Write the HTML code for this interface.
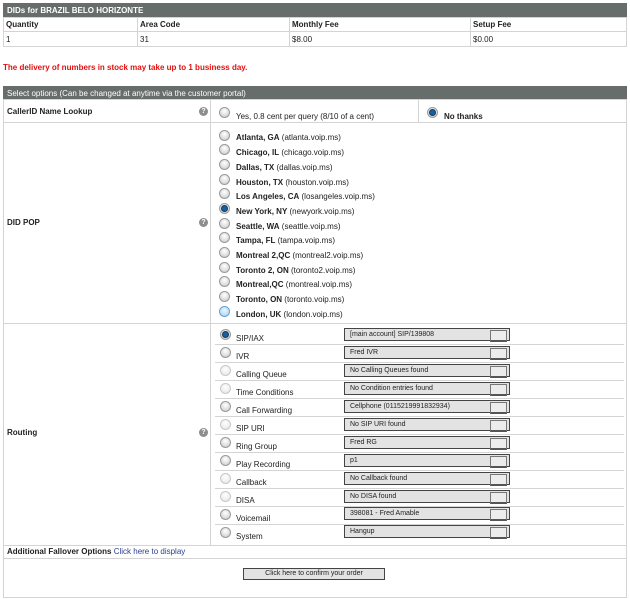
<!DOCTYPE html>
<html><head><meta charset="utf-8"><style>
*{margin:0;padding:0;box-sizing:border-box}
body{width:630px;height:599px;background:#fff;position:relative;overflow:hidden;font-family:"Liberation Sans","DejaVu Sans",sans-serif;font-size:8px;color:#222}
.a{position:absolute}
.hd{background:#676d6a;color:#fff;font-weight:bold;padding:3px 4px;height:14px;line-height:9px}
.b{font-weight:bold}
.bx{border:1px solid #d4d4d4}
.vl{position:absolute;width:1px;background:#d4d4d4}
.hl{position:absolute;height:1px;background:#d4d4d4}
.r{position:absolute;width:11px;height:11px;border-radius:50%;background:radial-gradient(circle at 50% 35%,#fff,#d8d8d8 70%,#b8b8b8);border:1px solid #9a9a9a}
.r.on::after{content:"";position:absolute;left:2px;top:2px;width:5px;height:5px;border-radius:50%;background:#1d5f9c;box-shadow:0 0 0 1px #0c3a66}
.r.lt{background:radial-gradient(circle at 50% 35%,#eaf6ff,#b8dcf5 70%,#7fb8e0);border-color:#6aa2cf}
.r.dim{border-color:#c8c8c8;background:radial-gradient(circle at 50% 35%,#fff,#ececec 70%)}
.q{position:absolute;width:9px;height:9px;border-radius:50%;background:#8d8d8d;color:#fff;font-size:7px;line-height:9px;text-align:center;font-weight:bold}
.sel{position:absolute;left:344px;width:166px;height:13px;border:1px solid #444;background:#e3e3e3;font-size:7px;line-height:11px;padding-left:5px;color:#222}
.sel::after{content:"";position:absolute;right:2px;top:1px;width:15px;height:9px;border:1px solid #777;background:#ececec;border-bottom:2px solid #555}
.t{position:absolute;left:236px;font-size:8px;white-space:nowrap}
</style></head><body>
<div class="a hd" style="left:3px;top:3px;width:624px">DIDs for BRAZIL BELO HORIZONTE</div>
<div class="a bx" style="left:3px;top:17px;width:624px;height:30px"></div>
<div class="hl" style="left:3px;top:31px;width:624px"></div>
<div class="vl" style="left:137px;top:17px;height:30px"></div>
<div class="vl" style="left:289px;top:17px;height:30px"></div>
<div class="vl" style="left:470px;top:17px;height:30px"></div>
<div class="a b" style="left:6px;top:20px">Quantity</div>
<div class="a b" style="left:140px;top:20px">Area Code</div>
<div class="a b" style="left:292px;top:20px">Monthly Fee</div>
<div class="a b" style="left:473px;top:20px">Setup Fee</div>
<div class="a" style="left:6px;top:35px">1</div>
<div class="a" style="left:140px;top:35px">31</div>
<div class="a" style="left:292px;top:35px">$8.00</div>
<div class="a" style="left:473px;top:35px">$0.00</div>
<div class="a b" style="left:3px;top:63px;color:#e01010">The delivery of numbers in stock may take up to 1 business day.</div>

<div class="a hd" style="left:3px;top:86px;width:624px;font-weight:normal">Select options (Can be changed at anytime via the customer portal)</div>
<div class="a bx" style="left:3px;top:99px;width:624px;height:499px"></div>
<div class="vl" style="left:210px;top:99px;height:446px"></div>
<div class="vl" style="left:418px;top:99px;height:23px"></div>
<div class="hl" style="left:3px;top:122px;width:624px"></div>
<div class="hl" style="left:3px;top:323px;width:624px"></div>
<div class="hl" style="left:3px;top:545px;width:624px"></div>
<div class="hl" style="left:3px;top:558px;width:624px"></div>

<div class="a b" style="left:7px;top:107px">CallerID Name Lookup</div>
<div class="q" style="left:199px;top:107px">?</div>
<div class="r" style="left:219px;top:107px"></div>
<div class="a" style="left:236px;top:112px">Yes, 0.8 cent per query (8/10 of a cent)</div>
<div class="r on" style="left:427px;top:107px"></div>
<div class="a b" style="left:444px;top:112px">No thanks</div>

<div class="a b" style="left:7px;top:218px">DID POP</div>
<div class="q" style="left:199px;top:218px">?</div>
<div class="r" style="left:219px;top:130px"></div><div class="t" style="top:133px"><b>Atlanta, GA</b> (atlanta.voip.ms)</div>
<div class="r" style="left:219px;top:144px"></div><div class="t" style="top:148px"><b>Chicago, IL</b> (chicago.voip.ms)</div>
<div class="r" style="left:219px;top:159px"></div><div class="t" style="top:163px"><b>Dallas, TX</b> (dallas.voip.ms)</div>
<div class="r" style="left:219px;top:174px"></div><div class="t" style="top:178px"><b>Houston, TX</b> (houston.voip.ms)</div>
<div class="r" style="left:219px;top:188px"></div><div class="t" style="top:192px"><b>Los Angeles, CA</b> (losangeles.voip.ms)</div>
<div class="r on" style="left:219px;top:203px"></div><div class="t" style="top:207px"><b>New York, NY</b> (newyork.voip.ms)</div>
<div class="r" style="left:219px;top:218px"></div><div class="t" style="top:222px"><b>Seattle, WA</b> (seattle.voip.ms)</div>
<div class="r" style="left:219px;top:232px"></div><div class="t" style="top:236px"><b>Tampa, FL</b> (tampa.voip.ms)</div>
<div class="r" style="left:219px;top:247px"></div><div class="t" style="top:251px"><b>Montreal 2,QC</b> (montreal2.voip.ms)</div>
<div class="r" style="left:219px;top:262px"></div><div class="t" style="top:266px"><b>Toronto 2, ON</b> (toronto2.voip.ms)</div>
<div class="r" style="left:219px;top:276px"></div><div class="t" style="top:280px"><b>Montreal,QC</b> (montreal.voip.ms)</div>
<div class="r" style="left:219px;top:291px"></div><div class="t" style="top:295px"><b>Toronto, ON</b> (toronto.voip.ms)</div>
<div class="r lt" style="left:219px;top:306px"></div><div class="t" style="top:310px"><b>London, UK</b> (london.voip.ms)</div>

<div class="a b" style="left:7px;top:428px">Routing</div>
<div class="q" style="left:199px;top:428px">?</div>

<div class="r on" style="left:220px;top:329px"></div><div class="t" style="top:334px">SIP/IAX</div><div class="sel" style="top:328px">[main account] SIP/139808</div>
<div class="hl" style="left:215px;top:344px;width:409px"></div>
<div class="r" style="left:220px;top:347px"></div><div class="t" style="top:352px">IVR</div><div class="sel" style="top:346px">Fred IVR</div>
<div class="hl" style="left:215px;top:362px;width:409px"></div>
<div class="r dim" style="left:220px;top:365px"></div><div class="t" style="top:370px">Calling Queue</div><div class="sel" style="top:364px">No Calling Queues found</div>
<div class="hl" style="left:215px;top:380px;width:409px"></div>
<div class="r dim" style="left:220px;top:383px"></div><div class="t" style="top:388px">Time Conditions</div><div class="sel" style="top:382px">No Condition entries found</div>
<div class="hl" style="left:215px;top:398px;width:409px"></div>
<div class="r" style="left:220px;top:401px"></div><div class="t" style="top:406px">Call Forwarding</div><div class="sel" style="top:400px">Cellphone (0115219991832934)</div>
<div class="hl" style="left:215px;top:416px;width:409px"></div>
<div class="r dim" style="left:220px;top:419px"></div><div class="t" style="top:424px">SIP URI</div><div class="sel" style="top:418px">No SIP URI found</div>
<div class="hl" style="left:215px;top:434px;width:409px"></div>
<div class="r" style="left:220px;top:437px"></div><div class="t" style="top:442px">Ring Group</div><div class="sel" style="top:436px">Fred RG</div>
<div class="hl" style="left:215px;top:452px;width:409px"></div>
<div class="r" style="left:220px;top:455px"></div><div class="t" style="top:460px">Play Recording</div><div class="sel" style="top:454px">p1</div>
<div class="hl" style="left:215px;top:470px;width:409px"></div>
<div class="r dim" style="left:220px;top:473px"></div><div class="t" style="top:478px">Callback</div><div class="sel" style="top:472px">No Callback found</div>
<div class="hl" style="left:215px;top:488px;width:409px"></div>
<div class="r dim" style="left:220px;top:491px"></div><div class="t" style="top:496px">DISA</div><div class="sel" style="top:490px">No DISA found</div>
<div class="hl" style="left:215px;top:506px;width:409px"></div>
<div class="r" style="left:220px;top:509px"></div><div class="t" style="top:514px">Voicemail</div><div class="sel" style="top:507px">398081 - Fred Amable</div>
<div class="hl" style="left:215px;top:524px;width:409px"></div>
<div class="r" style="left:220px;top:527px"></div><div class="t" style="top:532px">System</div><div class="sel" style="top:525px">Hangup</div>

<div class="a" style="left:7px;top:547px"><b>Additional Fallover Options</b> <span style="color:#2a3f8f">Click here to display</span></div>
<div class="a" style="left:243px;top:568px;width:142px;height:12px;border:1px solid #444;background:#e3e3e3;font-size:7px;line-height:10px;text-align:center">Click here to confirm your order</div>
</body></html>
